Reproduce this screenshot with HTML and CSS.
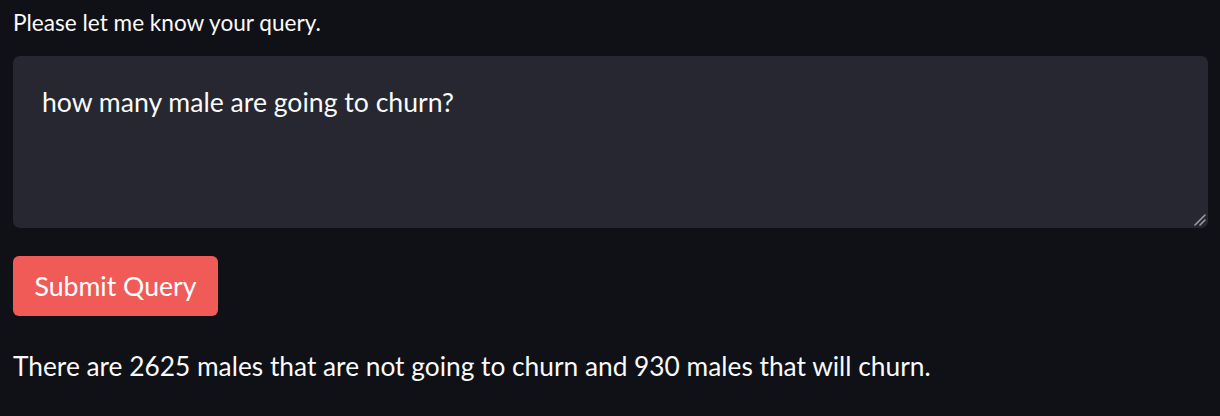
FILE: index.html
```html
<!DOCTYPE html>
<html>
<head>
<meta charset="utf-8">
<link rel="stylesheet" href="styles.css">
</head>
<body>
<div class="app">
  <label class="label">Please let me know your query.</label>
  <div class="textarea">
    <div class="ta-text">how many male are going to churn?</div>
    <svg class="grip" width="14" height="14" viewBox="0 0 14 14"><path d="M13 3 L3 13 M13 8 L8 13" stroke="#9a9aa0" stroke-width="1.6" stroke-linecap="round"/></svg>
  </div>
  <div class="btn-row"><button class="btn">Submit Query</button></div>
  <p class="result">There are 2625 males that are not going to churn and 930 males that will churn.</p>
</div>
</body>
</html>
```
FILE: styles.css
```css
html, body { margin: 0; padding: 0; background: #0f1117; }
body { width: 1220px; height: 416px; overflow: hidden; font-family: "Lato", "Noto Sans", sans-serif; color: #fafafa; }
.app { padding: 9px 12px 0 13px; display: flex; flex-direction: column; }
.label { font-size: 22.6px; line-height: 28px; height: 47px; }
.textarea { position: relative; background: #262730; border-radius: 7px; height: 172px; box-sizing: border-box; padding: 29px 29px; }
.ta-text { font-size: 26.6px; line-height: 34px; }
.grip { position: absolute; right: 2px; bottom: 2px; }
.btn-row { margin-top: 28px; }
.btn { background: #f05b57; color: #fff; border: none; border-radius: 6px; width: 205px; height: 60px; font-family: inherit; font-size: 26.6px; padding: 0; }
.result { margin: 33px 0 0; font-size: 26.3px; line-height: 34px; }
```
